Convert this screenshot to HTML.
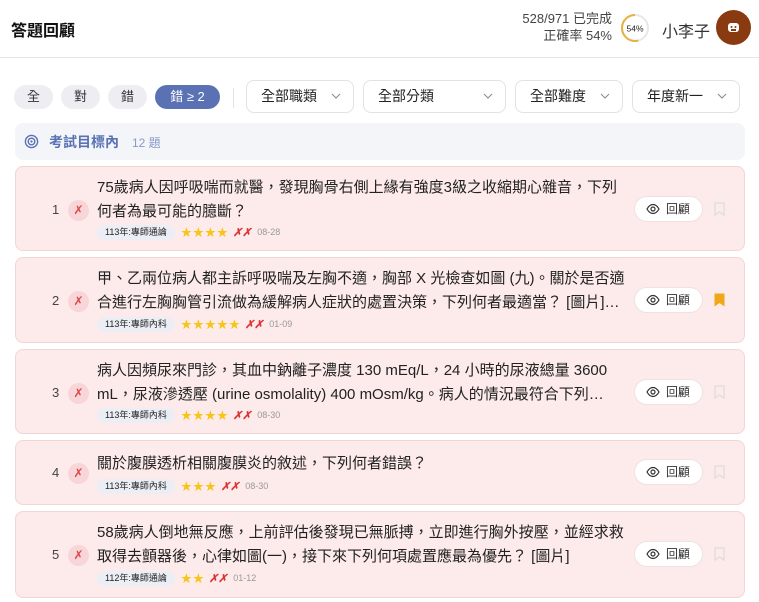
<!DOCTYPE html>
<html><head><meta charset="utf-8"><style>
*{box-sizing:border-box;margin:0;padding:0}
body{width:759px;height:602px;background:#fff;font-family:"Liberation Sans","Noto Sans CJK TC",sans-serif;color:#222;position:relative;overflow:hidden}
.abs{position:absolute}
.title{left:11px;top:17px;font-size:16px;font-weight:bold;color:#111}
.hr{left:0;top:57px;width:759px;height:1px;background:#e6e6e6}
.stat{right:147px;top:10px;text-align:right;font-size:13px;line-height:17px;color:#444}
.ring{left:620px;top:13px;width:30px;height:30px}
.name{left:662px;top:18px;font-size:16px;color:#333}
.av{left:716px;top:10px;width:35px;height:35px;border-radius:50%;background:#8a3a10}
.pill{top:85px;height:24px;border-radius:12px;background:#eeeef2;font-size:13px;text-align:center;line-height:24px;color:#333}
.sel{top:80px;height:33px;border:1px solid #e2e2e2;border-radius:8px;font-size:14px;line-height:31px;padding-left:14px;color:#222;background:#fff}
.sel svg{position:absolute;right:12px;top:12px}
.sec{left:15px;top:123px;width:730px;height:37px;border-radius:8px;background:#f4f5f8}
.card{left:15px;width:730px;border:1px solid #f2d6d6;border-radius:8px;background:#fdeaea}
.num{position:absolute;left:36px;font-size:13px;color:#444}
.xc{position:absolute;left:52px;width:21px;height:21px;border-radius:50%;background:#f7d5d8;color:#d44;font-size:12px;text-align:center;line-height:21px}
.q{position:absolute;left:81px;width:530px;font-size:15px;line-height:24px;color:#222}
.meta{position:absolute;left:81px;height:16px;font-size:9px;display:flex;align-items:center}
.tag{background:#ebeef5;border-radius:8px;padding:0 8px;height:15px;line-height:15px;font-size:9px;color:#222;margin-right:6px}
.st{color:#f5c518;font-size:11px;letter-spacing:1px;margin-right:4px}
.xx{color:#d33;font-size:11px;font-weight:bold;margin-right:6px;font-style:italic}
.dt{color:#999;font-size:9px}
.rv{position:absolute;left:618px;width:69px;height:26px;border-radius:13px;background:#fff;border:1px solid #f0e2e2;font-size:12px;line-height:24px;color:#333;padding-left:31px}
.rv svg{position:absolute;left:11px;top:6px}
.bm{position:absolute;left:698px}
</style></head><body>
<div class="abs title">答題回顧</div>
<div class="abs stat">528/971 已完成<br>正確率 54%</div>
<svg class="abs ring" viewBox="0 0 30 30"><circle cx="15" cy="15" r="13" fill="#fff" stroke="#e8e8e8" stroke-width="2"/><circle cx="15" cy="15" r="13" fill="none" stroke="#e8b040" stroke-width="2" stroke-dasharray="44 82" transform="rotate(-90 15 15) scale(1,-1) translate(0,-30)"/><text x="15" y="18.5" font-size="8.5" text-anchor="middle" fill="#222" font-family="Liberation Sans">54%</text></svg>
<div class="abs name">小李子</div>
<div class="abs av"><svg width="35" height="35" viewBox="0 0 35 35"><rect x="12" y="13" width="11" height="9" rx="3" fill="#fff"/><circle cx="15.5" cy="17" r="1" fill="#8a3a10"/><circle cx="19.5" cy="17" r="1" fill="#8a3a10"/><rect x="15" y="19" width="5" height="2" fill="#8a3a10"/></svg></div>
<div class="abs hr"></div>

<div class="abs pill" style="left:14px;width:39px">全</div>
<div class="abs pill" style="left:61px;width:39px">對</div>
<div class="abs pill" style="left:108px;width:39px">錯</div>
<div class="abs pill" style="left:155px;width:65px;background:#5a72b4;color:#fff">錯 ≥ 2</div>
<div class="abs" style="left:233px;top:88px;width:1px;height:20px;background:#e3e3e3"></div>
<div class="abs sel" style="left:246px;width:108px">全部職類<svg width="10" height="6" viewBox="0 0 10 6"><path d="M1 1l4 4 4-4" stroke="#888" fill="none"/></svg></div>
<div class="abs sel" style="left:363px;width:143px">全部分類<svg width="10" height="6" viewBox="0 0 10 6"><path d="M1 1l4 4 4-4" stroke="#888" fill="none"/></svg></div>
<div class="abs sel" style="left:515px;width:108px">全部難度<svg width="10" height="6" viewBox="0 0 10 6"><path d="M1 1l4 4 4-4" stroke="#888" fill="none"/></svg></div>
<div class="abs sel" style="left:632px;width:108px">年度新一<svg width="10" height="6" viewBox="0 0 10 6"><path d="M1 1l4 4 4-4" stroke="#888" fill="none"/></svg></div>

<div class="abs sec"><svg style="position:absolute;left:9px;top:11px" width="15" height="15" viewBox="0 0 16 16"><circle cx="8" cy="8" r="6.5" fill="none" stroke="#5a72b4" stroke-width="1.5"/><circle cx="8" cy="8" r="3.5" fill="none" stroke="#5a72b4" stroke-width="1.5"/><circle cx="8" cy="8" r="1.2" fill="#5a72b4"/></svg><span style="position:absolute;left:34px;top:9px;font-size:14px;color:#5a72b4;font-weight:bold">考試目標內</span><span style="position:absolute;left:117px;top:11px;font-size:12px;color:#8a9ac8">12 題</span></div>

<div class="abs card" style="top:166px;height:85px">
<div class="num" style="top:35px">1</div><div class="xc" style="top:33px">✗</div>
<div class="q" style="top:9px">75歲病人因呼吸喘而就醫，發現胸骨右側上緣有強度3級之收縮期心雜音，下列何者為最可能的臆斷？</div>
<div class="meta" style="top:57px"><span class="tag">113年:專師通論</span><span class="st">★★★★</span><span class="xx">✗✗</span><span class="dt">08-28</span></div>
<div class="rv" style="top:29px"><svg width="14" height="12" viewBox="0 0 14 12"><path d="M1 6C3 2.5 5 1.5 7 1.5S11 2.5 13 6C11 9.5 9 10.5 7 10.5S3 9.5 1 6Z" fill="none" stroke="#333" stroke-width="1.2"/><circle cx="7" cy="6" r="2" fill="none" stroke="#333" stroke-width="1.2"/></svg>回顧</div>
<svg class="bm" style="top:35px" width="11" height="14" viewBox="0 0 11 14"><path d="M1 1h9v12l-4.5-3L1 13Z" fill="none" stroke="#ddd" stroke-width="1.3"/></svg>
</div>
<div class="abs card" style="top:257px;height:86px">
<div class="num" style="top:35px">2</div><div class="xc" style="top:33px">✗</div>
<div class="q" style="top:9px">甲、乙兩位病人都主訴呼吸喘及左胸不適，胸部 X 光檢查如圖 (九)。關於是否適合進行左胸胸管引流做為緩解病人症狀的處置決策，下列何者最適當？ [圖片]…</div>
<div class="meta" style="top:58px"><span class="tag">113年:專師內科</span><span class="st">★★★★★</span><span class="xx">✗✗</span><span class="dt">01-09</span></div>
<div class="rv" style="top:29px"><svg width="14" height="12" viewBox="0 0 14 12"><path d="M1 6C3 2.5 5 1.5 7 1.5S11 2.5 13 6C11 9.5 9 10.5 7 10.5S3 9.5 1 6Z" fill="none" stroke="#333" stroke-width="1.2"/><circle cx="7" cy="6" r="2" fill="none" stroke="#333" stroke-width="1.2"/></svg>回顧</div>
<svg class="bm" style="top:35px" width="11" height="14" viewBox="0 0 11 14"><path d="M0.5 0.5h10v13l-5-3.5-5 3.5Z" fill="#f0a818"/></svg>
</div>
<div class="abs card" style="top:349px;height:85px">
<div class="num" style="top:35px">3</div><div class="xc" style="top:33px">✗</div>
<div class="q" style="top:9px">病人因頻尿來門診，其血中鈉離子濃度 130 mEq/L，24 小時的尿液總量 3600 mL，尿液滲透壓 (urine osmolality) 400 mOsm/kg。病人的情況最符合下列…</div>
<div class="meta" style="top:57px"><span class="tag">113年:專師內科</span><span class="st">★★★★</span><span class="xx">✗✗</span><span class="dt">08-30</span></div>
<div class="rv" style="top:29px"><svg width="14" height="12" viewBox="0 0 14 12"><path d="M1 6C3 2.5 5 1.5 7 1.5S11 2.5 13 6C11 9.5 9 10.5 7 10.5S3 9.5 1 6Z" fill="none" stroke="#333" stroke-width="1.2"/><circle cx="7" cy="6" r="2" fill="none" stroke="#333" stroke-width="1.2"/></svg>回顧</div>
<svg class="bm" style="top:35px" width="11" height="14" viewBox="0 0 11 14"><path d="M1 1h9v12l-4.5-3L1 13Z" fill="none" stroke="#ddd" stroke-width="1.3"/></svg>
</div>
<div class="abs card" style="top:440px;height:65px">
<div class="num" style="top:24px">4</div><div class="xc" style="top:22px">✗</div>
<div class="q" style="top:11px">關於腹膜透析相關腹膜炎的敘述，下列何者錯誤？</div>
<div class="meta" style="top:37px"><span class="tag">113年:專師內科</span><span class="st">★★★</span><span class="xx">✗✗</span><span class="dt">08-30</span></div>
<div class="rv" style="top:18px"><svg width="14" height="12" viewBox="0 0 14 12"><path d="M1 6C3 2.5 5 1.5 7 1.5S11 2.5 13 6C11 9.5 9 10.5 7 10.5S3 9.5 1 6Z" fill="none" stroke="#333" stroke-width="1.2"/><circle cx="7" cy="6" r="2" fill="none" stroke="#333" stroke-width="1.2"/></svg>回顧</div>
<svg class="bm" style="top:24px" width="11" height="14" viewBox="0 0 11 14"><path d="M1 1h9v12l-4.5-3L1 13Z" fill="none" stroke="#ddd" stroke-width="1.3"/></svg>
</div>
<div class="abs card" style="top:511px;height:87px">
<div class="num" style="top:35px">5</div><div class="xc" style="top:33px">✗</div>
<div class="q" style="top:9px">58歲病人倒地無反應，上前評估後發現已無脈搏，立即進行胸外按壓，並經求救取得去顫器後，心律如圖(一)，接下來下列何項處置應最為優先？ [圖片]</div>
<div class="meta" style="top:58px"><span class="tag">112年:專師通論</span><span class="st">★★</span><span class="xx">✗✗</span><span class="dt">01-12</span></div>
<div class="rv" style="top:29px"><svg width="14" height="12" viewBox="0 0 14 12"><path d="M1 6C3 2.5 5 1.5 7 1.5S11 2.5 13 6C11 9.5 9 10.5 7 10.5S3 9.5 1 6Z" fill="none" stroke="#333" stroke-width="1.2"/><circle cx="7" cy="6" r="2" fill="none" stroke="#333" stroke-width="1.2"/></svg>回顧</div>
<svg class="bm" style="top:35px" width="11" height="14" viewBox="0 0 11 14"><path d="M1 1h9v12l-4.5-3L1 13Z" fill="none" stroke="#ddd" stroke-width="1.3"/></svg>
</div>
</body></html>
